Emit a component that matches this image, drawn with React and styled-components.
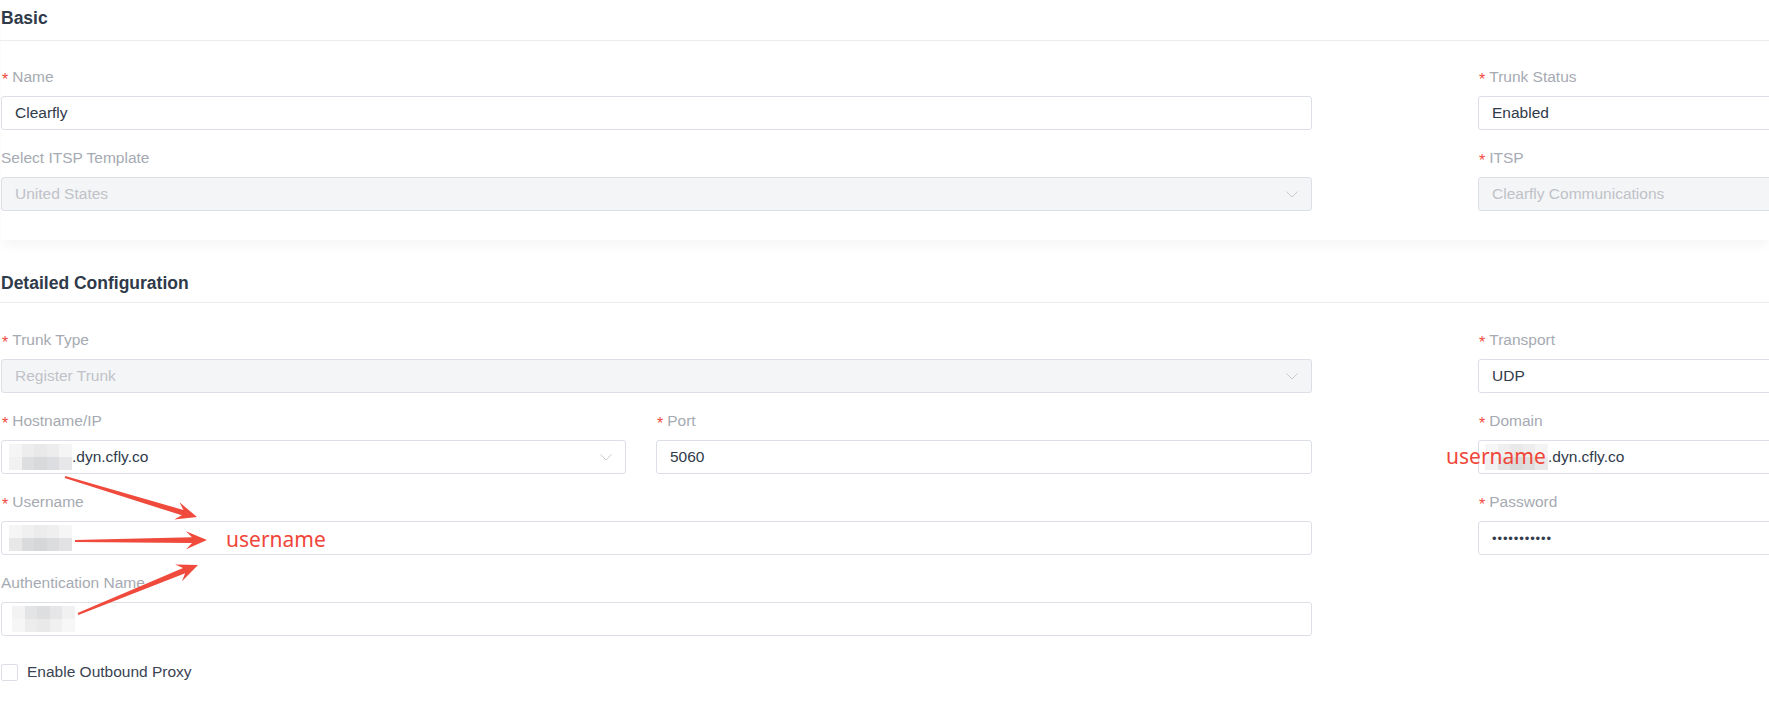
import React from 'react';
import styled, { createGlobalStyle } from 'styled-components';

const GlobalStyle = createGlobalStyle`
  body {
    margin: 0;
    background: #fff;
    font-family: "Liberation Sans", Arial, sans-serif;
    overflow: hidden;
  }
`;

const Page = styled.div`
  position: relative;
  overflow: hidden;
  padding-left: 1px;
  height: 703px;
`;

const Card = styled.section`
  background: #fff;
  padding-bottom: ${(p) => p.$pb || 0}px;
  margin-bottom: ${(p) => p.$mb || 0}px;
  box-shadow: ${(p) => (p.$shadow ? '0 7px 12px -2px rgba(0, 0, 0, 0.045)' : 'none')};
`;

const SectionTitle = styled.div`
  padding: ${(p) => p.$top}px 0 ${(p) => p.$bottom}px 1px;
  border-bottom: 1px solid #ebedf1;
  margin-left: -1px;
  font-size: 17.5px;
  font-weight: 700;
  line-height: 22px;
  color: #2f3a4a;
`;

const FormGrid = styled.div`
  display: grid;
  grid-template-columns: 1311px 1311px;
  column-gap: 166px;
  row-gap: 18px;
  padding-top: ${(p) => p.$pt}px;
`;

const SplitRow = styled.div`
  display: grid;
  grid-template-columns: 625px 656px;
  column-gap: 30px;
`;

const Item = styled.div`
  display: flex;
  flex-direction: column;
`;

const Label = styled.div`
  display: flex;
  align-items: center;
  height: 20px;
  margin-bottom: 9px;
  font-size: 15.5px;
  color: #a6aab2;
  white-space: nowrap;
`;

const Star = styled.span`
  display: inline-block;
  padding-top: 6px;
  margin-left: 1px;
  margin-right: 4px;
  font-size: 16px;
  color: #f04b3c;
`;

const Field = styled.div`
  box-sizing: border-box;
  height: 34px;
  display: flex;
  align-items: center;
  padding: 0 13px;
  border: 1px solid #dcdfe6;
  border-radius: 3px;
  background: ${(p) => (p.$disabled ? '#f4f5f7' : '#fff')};
  color: ${(p) => (p.$disabled ? '#bfc2c8' : '#303a4a')};
  font-size: 15.5px;
  white-space: nowrap;
`;

const Chevron = styled.svg`
  margin-left: auto;
  flex: none;
`;

const Dots = styled.span`
  font-size: 13px;
  letter-spacing: 0.9px;
  color: #333d4c;
`;

const Mosaic = styled.div`
  display: grid;
  grid-template-columns: repeat(5, 12.6px);
  grid-auto-rows: 13px;
  margin-left: ${(p) => p.$ml}px;
  flex: none;
`;

const Cell = styled.div`
  background: ${(p) => p.$c};
`;

const CheckRow = styled.label`
  grid-column: 1 / -1;
  display: flex;
  align-items: center;
  height: 20px;
  margin-top: 8px;
  font-size: 15.5px;
  color: #3a4352;
`;

const Box = styled.span`
  box-sizing: border-box;
  width: 17px;
  height: 17px;
  border: 1px solid #dcdfe6;
  border-radius: 2px;
  background: #fff;
  margin-right: 9px;
`;

const Overlay = styled.svg`
  position: absolute;
  left: 0;
  top: 0;
  pointer-events: none;
`;

const Note = styled.span`
  position: absolute;
  left: ${(p) => p.$x}px;
  top: ${(p) => p.$y}px;
  font-family: "Noto Sans", "Noto Sans CJK SC", sans-serif;
  font-size: 21px;
  line-height: 26px;
  color: #f0463a;
`;

const Arrow = ({ from, to }) => {
  const [x1, y1] = from;
  const [x2, y2] = to;
  const len = Math.hypot(x2 - x1, y2 - y1);
  const ux = (x2 - x1) / len;
  const uy = (y2 - y1) / len;
  const nx = -uy;
  const ny = ux;
  const head = 21;
  const hw = 9;
  const sw = 2.8;
  const tw = 1.1;
  const bx = x2 - ux * head;
  const by = y2 - uy * head;
  const jx = bx + ux * 6;
  const jy = by + uy * 6;
  const pts = [
    [x1 + nx * tw, y1 + ny * tw],
    [jx + nx * sw, jy + ny * sw],
    [bx + nx * hw, by + ny * hw],
    [x2, y2],
    [bx - nx * hw, by - ny * hw],
    [jx - nx * sw, jy - ny * sw],
    [x1 - nx * tw, y1 - ny * tw],
  ];
  return <polygon points={pts.map((p) => p.join(',')).join(' ')} fill="#ef4a3c" />;
};

const ArrowDown = () => (
  <Chevron width="12" height="7" viewBox="0 0 12 7">
    <polyline points="0.5,0.5 6,6 11.5,0.5" fill="none" stroke="#c8cad0" strokeWidth="1" />
  </Chevron>
);

const Blur = ({ cells, ml }) => (
  <Mosaic $ml={ml}>
    {cells.map((c, i) => (
      <Cell key={i} $c={c} />
    ))}
  </Mosaic>
);

const hostCells = ['#f5f5f5', '#ededed', '#e9e9ea', '#ededed', '#f5f5f5', '#f1f1f1', '#dddee0', '#d8d9db', '#dcdde0', '#e7e7e9'];
const userCells = ['#f5f5f5', '#f0f0f0', '#ececec', '#efefef', '#f6f6f6', '#e8e8e8', '#dadbdd', '#d6d7d9', '#dbdcde', '#e2e2e4'];
const authCells = ['#f3f3f3', '#e3e4e6', '#dddee0', '#e6e6e8', '#f1f1f1', '#f6f6f6', '#ececec', '#e9e9e9', '#f0f0f0', '#f7f7f7'];
const domainCells = ['#f6f6f6', '#efefef', '#e9e9e9', '#ededed', '#f4f4f4', '#f1f1f1', '#e3e3e3', '#dadada', '#dedede', '#e9e9e9'];

const FormItem = ({ label, required, children }) => (
  <Item>
    <Label>
      {required && <Star>*</Star>}
      {label}
    </Label>
    {children}
  </Item>
);

const App = () => {
  return (
    <>
      <GlobalStyle />
      <Page>
        <Card $pb={29} $mb={18} $shadow>
          <SectionTitle $top={7} $bottom={11}>Basic</SectionTitle>
          <FormGrid $pt={26}>
            <FormItem label="Name" required>
              <Field>Clearfly</Field>
            </FormItem>
            <FormItem label="Trunk Status" required>
              <Field>Enabled</Field>
            </FormItem>
            <FormItem label="Select ITSP Template">
              <Field $disabled>
                United States
                <ArrowDown />
              </Field>
            </FormItem>
            <FormItem label="ITSP" required>
              <Field $disabled>Clearfly Communications</Field>
            </FormItem>
          </FormGrid>
        </Card>

        <Card>
          <SectionTitle $top={14} $bottom={8}>Detailed Configuration</SectionTitle>
          <FormGrid $pt={27}>
            <FormItem label="Trunk Type" required>
              <Field $disabled>
                Register Trunk
                <ArrowDown />
              </Field>
            </FormItem>
            <FormItem label="Transport" required>
              <Field>UDP</Field>
            </FormItem>

            <SplitRow>
              <FormItem label="Hostname/IP" required>
                <Field>
                  <Blur cells={hostCells} ml={-6} />
                  .dyn.cfly.co
                  <ArrowDown />
                </Field>
              </FormItem>
              <FormItem label="Port" required>
                <Field>5060</Field>
              </FormItem>
            </SplitRow>
            <FormItem label="Domain" required>
              <Field>
                <Blur cells={domainCells} ml={-7} />
                .dyn.cfly.co
              </Field>
            </FormItem>

            <FormItem label="Username" required>
              <Field>
                <Blur cells={userCells} ml={-6} />
              </Field>
            </FormItem>
            <FormItem label="Password" required>
              <Field>
                <Dots>•••••••••••</Dots>
              </Field>
            </FormItem>

            <FormItem label="Authentication Name">
              <Field>
                <Blur cells={authCells} ml={-3} />
              </Field>
            </FormItem>
            <div />

            <CheckRow>
              <Box />
              Enable Outbound Proxy
            </CheckRow>
          </FormGrid>
        </Card>

        <Overlay width="1769" height="703">
          <Arrow from={[65, 477]} to={[197, 517]} />
          <Arrow from={[75, 541]} to={[207, 540]} />
          <Arrow from={[78, 614]} to={[198, 565]} />
        </Overlay>
        <Note $x={226} $y={526}>username</Note>
        <Note $x={1446} $y={443}>username</Note>
      </Page>
    </>
  );
};

export default App;
